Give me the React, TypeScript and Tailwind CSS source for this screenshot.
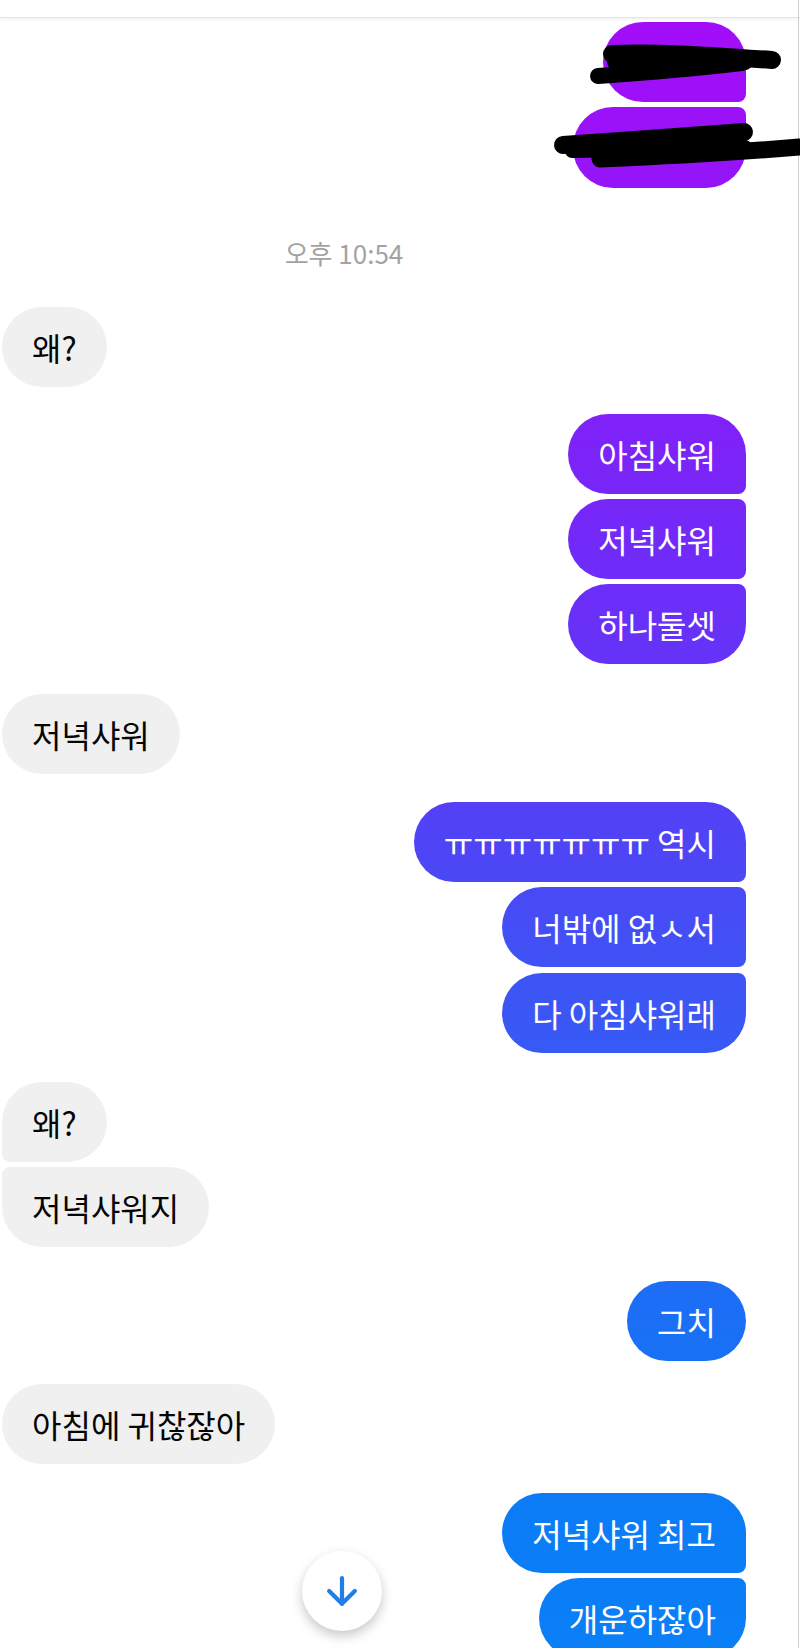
import React from "react";
import { ArrowDown } from "lucide-react";

type Shape = "single" | "first" | "middle" | "last";

const sentShape: Record<Shape, string> = {
  single: "rounded-[40px]",
  first: "rounded-l-[40px] rounded-tr-[40px] rounded-br-[8px]",
  middle: "rounded-l-[40px] rounded-r-[8px]",
  last: "rounded-l-[40px] rounded-tr-[8px] rounded-br-[40px]",
};

const recvShape: Record<Shape, string> = {
  single: "rounded-[40px]",
  first: "rounded-r-[40px] rounded-tl-[40px] rounded-bl-[8px]",
  middle: "rounded-r-[40px] rounded-l-[8px]",
  last: "rounded-r-[40px] rounded-tl-[8px] rounded-bl-[40px]",
};

// messenger gradient, fixed to the viewport so each bubble takes its own slice
const gradient =
  "bg-fixed bg-[linear-gradient(180deg,#a50cf8_0%,#9a12f8_8%,#7d23f8_27%,#6a2ff8_37%,#5142f6_50%,#3d55f5_60%,#1c6ef5_79%,#0b7cf6_92%,#0a7ff6_100%)]";

function Sent({ text, shape, mt }: { text: string; shape: Shape; mt: string }) {
  return (
    <div
      className={`self-end h-[80px] px-[30px] flex items-center text-white text-[32px] leading-none whitespace-pre ${gradient} ${sentShape[shape]} ${mt}`}
    >
      {text}
    </div>
  );
}

function Received({ text, shape, mt }: { text: string; shape: Shape; mt: string }) {
  return (
    <div
      className={`self-start h-[80px] px-[30px] flex items-center bg-[#f0f0f0] text-[#050505] text-[32px] leading-none whitespace-pre ${recvShape[shape]} ${mt}`}
    >
      {text}
    </div>
  );
}

export default function App() {
  return (
    <div className="relative w-[800px] h-[1648px] overflow-hidden bg-white font-['Noto_Sans_CJK_KR','Noto_Sans',sans-serif]">
      {/* top bar */}
      <div className="h-[18px] bg-white border-b border-[#e6e6e6] shadow-[0_1px_3px_rgba(0,0,0,0.08)]" />

      {/* scrollbar edge */}
      <div className="absolute top-0 right-[1px] w-px h-full bg-[#cfcfcf]" />

      <div className="flex flex-col pl-[2px] pr-[54px]">
        {/* redacted bubbles */}
        <div className={`self-end mt-[4px] h-[80px] w-[143px] ${gradient} ${sentShape.first}`} />
        <div className={`self-end mt-[5px] h-[81px] w-[173px] ${gradient} ${sentShape.last}`} />

        <div className="mt-[44px] h-[40px] w-[684px] flex items-center justify-center text-[26px] text-[#a3a3a3]">
          오후 10:54
        </div>

        <Received text="왜?" shape="single" mt="mt-[35px]" />

        <Sent text="아침샤워" shape="first" mt="mt-[27px]" />
        <Sent text="저녁샤워" shape="middle" mt="mt-[5px]" />
        <Sent text="하나둘셋" shape="last" mt="mt-[5px]" />

        <Received text="저녁샤워" shape="single" mt="mt-[30px]" />

        <Sent text="ㅠㅠㅠㅠㅠㅠㅠ 역시" shape="first" mt="mt-[28px]" />
        <Sent text="너밖에 없ㅅ서" shape="middle" mt="mt-[5px]" />
        <Sent text="다 아침샤워래" shape="last" mt="mt-[6px]" />

        <Received text="왜?" shape="first" mt="mt-[29px]" />
        <Received text="저녁샤워지" shape="last" mt="mt-[5px]" />

        <Sent text="그치" shape="single" mt="mt-[34px]" />

        <Received text="아침에 귀찮잖아" shape="single" mt="mt-[23px]" />

        <Sent text="저녁샤워 최고" shape="first" mt="mt-[29px]" />
        <Sent text="개운하잖아" shape="last" mt="mt-[5px]" />
      </div>

      {/* marker scribbles over the first two bubbles */}
      <svg
        className="absolute top-0 left-0 pointer-events-none"
        width="800"
        height="200"
        viewBox="0 0 800 200"
        fill="none"
        stroke="#000"
        strokeLinecap="round"
        strokeLinejoin="round"
      >
        <path d="M612 54 C650 52 700 55 772 60" strokeWidth="18" />
        <path d="M615 62 C660 60 700 61 745 62" strokeWidth="16" />
        <path d="M598 76 C640 73 690 69 742 63" strokeWidth="16" />
        <path d="M563 145 C620 141 690 136 744 132" strokeWidth="18" />
        <path d="M572 151 C640 150 700 149 745 147" strokeWidth="14" />
        <path d="M600 159 C670 156 740 152 799 147" strokeWidth="17" />
      </svg>

      {/* scroll to bottom */}
      <div className="absolute left-[302px] top-[1551px] w-[80px] h-[80px] rounded-full bg-white shadow-[0_5px_12px_rgba(0,0,0,0.22)] flex items-center justify-center">
        <ArrowDown size={44} strokeWidth={2.3} className="text-[#1f7fe6]" />
      </div>
    </div>
  );
}
